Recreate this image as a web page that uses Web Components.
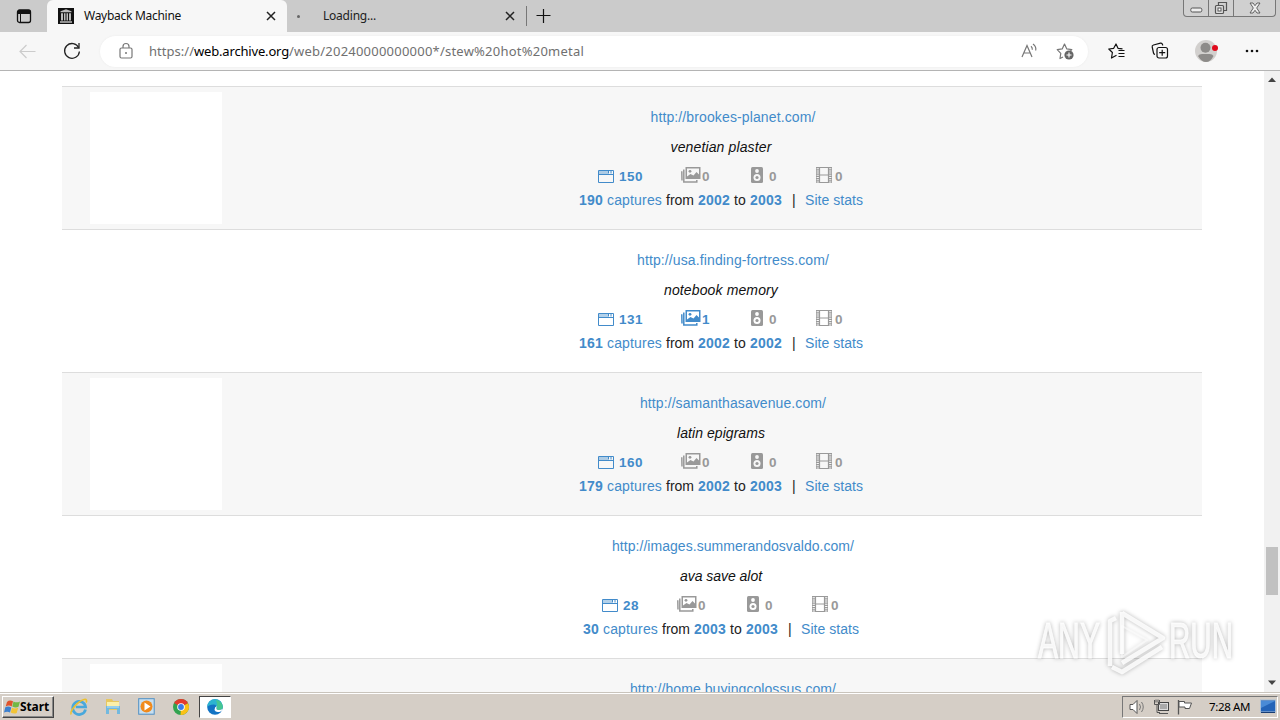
<!DOCTYPE html>
<html lang="en">
<head>
<meta charset="utf-8">
<title>Wayback Machine</title>
<style>
html,body{margin:0;height:100%;overflow:hidden;background:#fff}
body{font-family:"Liberation Sans",Arial,sans-serif;font-size:14px;color:#222}
</style>
</head>
<body>
<desktop-screen></desktop-screen>
<script>
class Base extends HTMLElement {
  connectedCallback() {
    if (this.shadowRoot) return;
    this.attachShadow({mode: 'open'}).innerHTML = this.render();
  }
}

/* Single line of text, tracked so it fills the width given in "w". */
class FitText extends HTMLElement {
  connectedCallback() {
    if (this.shadowRoot) return;
    const w = +this.getAttribute('w');
    this.attachShadow({mode: 'open'}).innerHTML =
      `<style>:host{display:block;flex:none;width:${w}px;white-space:pre}span{display:inline-block}</style><span><slot></slot></span>`;
    const s = this.shadowRoot.querySelector('span');
    const n = this.textContent.length;
    s.style.letterSpacing = ((w - s.getBoundingClientRect().width) / n) + 'px';
  }
}

const ICONS = {
  tabs: [16,16,`<rect x="1.5" y="2" width="13" height="12.5" rx="2" fill="none" stroke="#111" stroke-width="1.3"/><path d="M1.5 6V4Q1.5 2 3.5 2h9q2 0 2 2v2z" fill="#111"/><path d="M4.5 6v8" stroke="#111"/>`],
  archive: [16,16,`<path d="M0 0h16v16H0z" fill="#111"/><path d="M8 1.3l5.5 2v1h-11v-1zM3 5.2h2v7.300H3zM6 5.200h1.500v7.300H6zM8.500 5.200H10v7.300H8.500zM11 5.200h2v7.300h-2zM2 13.300h12v1.400H2z" fill="#bbb"/>`],
  x: [10,10,`<path d="M1 1l8 8M9 1L1 9" stroke="#222" stroke-width="1.500"/>`],
  plus: [14,14,`<path d="M6.500 0v14M-.5 6.500h14" stroke="#111" stroke-width="1.200"/>`],
  back: [17,15,`<path d="M16.500 7.500H1M7.500 1L1 7.500 7.500 14" fill="none" stroke="#ccc" stroke-width="1.200"/>`],
  reload: [18,18,`<path d="M15.700 5.700A7.400 7.400 0 1 0 16.400 9.500" fill="none" stroke="#222" stroke-width="1.300"/><path d="M16 1v5h-5" fill="none" stroke="#222" stroke-width="1.300"/>`],
  lock: [14,17,`<rect x="1" y="5" width="12" height="10" rx="1.500" fill="none" stroke="#777" stroke-width="1.200"/><path d="M4 5V3.500a3 3 0 0 1 6 0V5" fill="none" stroke="#777" stroke-width="1.200"/><circle cx="7" cy="10" r="1" fill="#777"/>`],
  read: [16,16,`<path d="M1 14L6 2.500 11 14M2.800 10h6.500" fill="none" stroke="#777" stroke-width="1.200"/><path d="M10 3.300q1.500 1.300 1.300 3.500M12 1q3.500 2.500 2.700 6.500" fill="none" stroke="#777" stroke-width="1.200"/>`],
  staradd: [18,18,`<path d="M7 15l-3 1.500.8-5.200L1.200 7.700l5-.8L8.500 2l2.300 4.900 5 .8-1.500 1.500" fill="none" stroke="#777" stroke-width="1.200" stroke-linejoin="round"/><circle cx="13" cy="13" r="4.600" fill="#666"/><path d="M13 10.500v5M10.500 13h5" stroke="#fff" stroke-width="1.100"/>`],
  favs: [17,16,`<path d="M8.500 12.200L3.500 15l.9-5.500L.8 6l4.900-.7L8 1l2 4.300 4.500.5" fill="none" stroke="#111" stroke-width="1.200" stroke-linejoin="round"/><path d="M10.500 7.500H16.500M10.500 10.500h6M10.500 13.500h6" stroke="#111" stroke-width="1.200"/>`],
  collections: [18,18,`<path d="M4 12.500Q2.800 12.300 2.500 11L1.200 5Q.8 3.500 2.500 3l7-1.800Q11 .9 11.500 2.500L11.700 3.500" fill="none" stroke="#111" stroke-width="1.200"/><rect x="6" y="5.500" width="10.500" height="10.500" rx="2" fill="#f7f7f7" stroke="#111" stroke-width="1.200"/><path d="M11.200 7.700v6M8.200 10.700h6" stroke="#111" stroke-width="1.200"/>`],
  profile: [24,24,`<circle cx="12" cy="12" r="11" fill="#d2d0ce"/><circle cx="11.500" cy="8.700" r="5" fill="#8d8b89"/><path d="M4 17q1-2 4-2h7.500q3 0 4 2-3 6-7.500 6T4 17z" fill="#8d8b89"/><circle cx="21" cy="9" r="3" fill="#e00b1c"/>`],
  more: [14,4,`<g fill="#111"><circle cx="2" cy="2" r="1.300"/><circle cx="7" cy="2" r="1.300"/><circle cx="12" cy="2" r="1.300"/></g>`],
  min: [13,6,`<rect x=".8" y="1" width="11" height="4" rx="1.500" fill="#eee" stroke="#555"/>`],
  restore: [14,14,`<path d="M4.500 4V1.500h8v8H10" fill="none" stroke="#555" stroke-width="1.200"/><rect x="1.500" y="4.500" width="8" height="8" rx="1" fill="#ddd" stroke="#555" stroke-width="1.200"/><rect x="4" y="7" width="3" height="3" fill="#fff" stroke="#555"/>`],
  close: [12,12,`<path d="M1 1h3l2 2.700L8 1h3L7.700 6 11 11H8L6 8.300 4 11H1l3.300-5z" fill="#eee" stroke="#555" stroke-width=".9"/>`],
  web: [16,14,`<path d="M.5 1.500h15v12H.5zM.5 5.500h15" fill="none" stroke="currentColor"/><path d="M1 2h9v3H1z" fill="currentColor" opacity=".4"/><path d="M10.500 1.500v3M13 1.500v3" stroke="currentColor"/>`],
  image: [20,17,`<path d="M4.500 1h15v12h-15z" fill="currentColor"/><path d="M6 2.500h12v6l-2.500-2.500-3 3.500L9.500 8 6 10.500z" fill="var(--hole,#f7f7f7)"/><circle cx="9" cy="5.300" r="1.400" fill="currentColor"/><path d="M3.500 4.200H2.800V16h13v-2M1.500 6H.800l.2 8.500" fill="none" stroke="currentColor" stroke-width="1.500"/>`],
  audio: [12,17,`<rect y="1" width="12" height="16" rx="1.500" fill="currentColor"/><circle cx="6" cy="5" r="1.900" fill="var(--hole,#f7f7f7)"/><circle cx="6" cy="11.500" r="3.500" fill="var(--hole,#f7f7f7)"/><circle cx="6" cy="11.500" r="1.600" fill="currentColor"/>`],
  film: [16,17,`<path d="M3.500 1.500h9v15h-9zM3.500 9h9" fill="none" stroke="currentColor" stroke-width="1.200"/><path d="M1.500 1v16M14.500 1v16" stroke="currentColor" stroke-width="3" stroke-dasharray="1.200 1"/><path d="M.5 1v16M15.500 1v16" stroke="currentColor" opacity=".6"/>`],
  up: [10,6,`<path d="M1 5L5 .500l4 4.500z" fill="#444"/>`],
  down: [10,6,`<path d="M1 .5L5 5 9 .5z" fill="#444"/>`],
  flag: [15,16,`<path d="M2 3Q4.500.500 8 2.300L6.700 7.500Q4 5.700.7 7.500z" fill="#e0532c"/><path d="M8.500 2.500q3 1.700 6.500 0l-1.500 5.200q-2.700 1.500-6.200-.2z" fill="#72b844"/><path d="M.3 8.300q3-1.500 6 .2L5 13.500Q2.500 12-1 13.400z" fill="#3c80cf"/><path d="M7 8.800q2.700 1.500 6.200 0L11.700 14q-2.500 1.300-6-.4z" fill="#f2c437"/>`],
  ie: [18,18,`<path d="M15.500 11.500A6.500 6.500 0 1 1 15.600 9H5.800" fill="none" stroke="#48a8dc" stroke-width="2.700"/><path d="M1.200 16.500C-1 13.500 8 3 14 1.500c3-.7 3 1.500 2 3" fill="none" stroke="#ecc02d" stroke-width="1.600"/>`],
  folder: [16,17,`<path d="M1 1h6l1 2h6v9H1z" fill="#e8c75e"/><path d="M2 4h12v4H2z" fill="#fbefa9"/><path d="M1 8h14v8h-3v-5H4v5H1z" fill="#72b9df"/><path d="M2 9h12" stroke="#bde4f7"/>`],
  media: [17,17,`<rect x=".7" y=".7" width="15.500" height="15.500" fill="#c8dff0" stroke="#4f8fc4"/><circle cx="8.500" cy="8.500" r="6" fill="#f08a1c"/><path d="M6.500 4.500v8l6-4z" fill="#fff"/>`],
  chrome: [16,16,`<circle cx="8" cy="8" r="8" fill="#32a350"/><path d="M8 8L1.100 4A8 8 0 0 1 15 4.200z" fill="#e33b2e"/><path d="M8 8l7-3.800A8 8 0 0 1 7.500 16z" fill="#fbc116"/><circle cx="8" cy="8" r="3.800" fill="#fff"/><circle cx="8" cy="8" r="2.900" fill="#397de9"/>`],
  edge: [16,16,`<circle cx="8" cy="8" r="7.800" fill="#1273c4"/><path d="M.2 8A7.800 7.800 0 0 1 15.800 7.500Q16 11 12 11q-3 0-2.500-2Q10 5.500 6.500 5.500 2 5.500.2 8z" fill="#2cb4d0"/><path d="M9 1q6 1 6.800 6.500Q16 11 12 11q-3 0-2.500-2Q11 5 9 1z" fill="#55cf70" opacity=".65"/><path d="M9.400 9q-.3 2 2.600 2 2.300 0 3.500-1.300.3 1.300-1.200 2.500Q9 14.500 7.500 11 7.500 8 9.700 7z" fill="#fff"/>`],
  sound: [17,16,`<path d="M1 5.500h3L8 1.500v13l-4-4H1z" fill="#fff" stroke="#555"/><path d="M10.500 5q2 3 0 6M12.500 3q3.500 5 0 10" fill="none" stroke="#777"/>`],
  net: [17,16,`<rect x="5.500" y="3.500" width="10" height="8" fill="#ddd" stroke="#444"/><path d="M7 5h7v5H7z" fill="#aaa"/><path d="M1.500 1v4.500h5V1M3 .5v3M5 .5v3M4 5.500v8h3M6 14.500h9" fill="none" stroke="#555"/>`],
  action: [16,16,`<path d="M1.500 1v14.500" stroke="#555" stroke-width="1.300"/><path d="M2 2.500h5.500V4h7l-2 5.500H8V8H2z" fill="#fff" stroke="#555"/>`],
  desk: [16,15,`<rect x=".5" y="1" width="15" height="12" fill="#2464b8" stroke="#a8bfd8"/><path d="M1 2h14L1 9z" fill="#4a8bd6"/><path d="M1 13.500h14" stroke="#173d74"/>`]
};
class UiIcon extends Base {
  render() {
    const [w, h, body] = ICONS[this.getAttribute('name')];
    return `<style>:host{display:block;flex:none;width:${w}px;height:${h}px}svg{display:block;overflow:visible}</style><svg width="${w}" height="${h}" viewBox="0 0 ${w} ${h}">${body}</svg>`;
  }
}

class TabStrip extends Base {
  render() { return `<style>
    :host{display:flex;height:32px;background:#cbcbcb;font:12px/32px "Noto Sans",sans-serif;color:#222;box-sizing:border-box;align-items:stretch}
    .pre{width:47px;display:flex;align-items:center;padding-left:16px;box-sizing:border-box}
    .on{width:240px;box-sizing:border-box;background:#f7f7f7;border-radius:6px 6px 0 0;display:flex;align-items:center;padding:0 11px;color:#111}
    .off{width:239px;box-sizing:border-box;display:flex;align-items:center;padding-left:10px}
    .dot{width:3px;height:3px;border-radius:50%;background:#666;margin-right:23px}
    .on ui-icon+fit-text{margin-left:10px}
    .x{margin-left:auto}.off .x{margin-right:11px}
    .sep{width:1px;height:20px;background:#777;align-self:center;margin-right:10px}
    .plus{align-self:center}
    .win{margin:0 4px 0 auto;display:flex;height:17px;width:93px;box-sizing:border-box;border:1px solid #777;border-top:0;border-radius:0 0 4px 4px;background:#d0d0d0}
    .win div{display:flex;justify-content:center;align-items:center;border-right:1px solid #777;width:24px}.win div:last-child{border:0;flex:1}
    .win div:first-child{align-items:flex-end}.win div:first-child ui-icon{margin-bottom:3px}
  </style>
  <div class="pre"><ui-icon name="tabs"></ui-icon></div>
  <div class="on"><ui-icon name="archive"></ui-icon><fit-text w="97">Wayback Machine</fit-text><ui-icon class="x" name="x"></ui-icon></div>
  <div class="off"><span class="dot"></span><fit-text w="53">Loading...</fit-text><ui-icon class="x" name="x"></ui-icon></div>
  <span class="sep"></span><ui-icon class="plus" name="plus"></ui-icon>
  <div class="win"><div><ui-icon name="min"></ui-icon></div><div><ui-icon name="restore"></ui-icon></div><div><ui-icon name="close"></ui-icon></div></div>`; }
}

class AddressBar extends Base {
  render() { return `<style>
    :host{display:flex;height:39px;box-sizing:border-box;background:#f7f7f7;border-bottom:1px solid #b4b4b4;align-items:center;padding-left:19px}
    .reload{margin:0 27px 0 27px}
    .pill{flex:none;width:988px;height:31px;box-sizing:border-box;border-radius:16px;background:#fff;display:flex;align-items:center;padding:0 14px 0 19px;margin-left:-8px;box-shadow:0 0 2px #e8e8e8;font:13px/30px "Noto Sans",sans-serif;color:#707070}
    .pill fit-text:first-of-type{margin-left:16px}.host{color:#000}
    .read{margin-left:auto;margin-right:19px}
    .favs{margin-left:20px}.col{margin-left:26px}.pro{margin-left:25px}.more{margin-left:27px}
  </style>
  <ui-icon name="back"></ui-icon><ui-icon class="reload" name="reload"></ui-icon>
  <div class="pill"><ui-icon name="lock"></ui-icon><fit-text w="45">https://</fit-text><fit-text class="host" w="95">web.archive.org</fit-text><fit-text w="295">/web/20240000000000*/stew%20hot%20metal</fit-text>
  <ui-icon class="read" name="read"></ui-icon><ui-icon name="staradd"></ui-icon></div>
  <ui-icon class="favs" name="favs"></ui-icon><ui-icon class="col" name="collections"></ui-icon><ui-icon class="pro" name="profile"></ui-icon><ui-icon class="more" name="more"></ui-icon>`; }
}

class MediaCount extends Base {
  render() {
    const a = n => this.getAttribute(n);
    return `<style>:host{display:flex;align-items:flex-end;color:#999;height:17px;gap:${a('gap')}px}
    :host([on]){color:#428bca}fit-text{font-weight:bold;font-size:13.500px;line-height:16px;margin-bottom:-2px}</style>
    <ui-icon name="${a('kind')}"></ui-icon><fit-text w="${a('w')}">${a('count')}</fit-text>`;
  }
}

class SiteResult extends Base {
  render() {
    const a = n => this.getAttribute(n);
    const details = () => {
      const nw = a('pages').length * 8, tw = a('total').length * 8;
      return `<fit-text class="q" w="${a('qw')}">${a('query')}</fit-text>
    <div class="media"><media-count on kind="web" gap="5" w="${nw}" count="${a('pages')}" style="margin-right:38px"></media-count>
    <media-count ${a('images') !== '0' ? 'on' : ''} kind="image" gap="1" w="8" count="${a('images')}" style="margin-right:41px"></media-count>
    <media-count kind="audio" gap="6" w="8" count="0" style="margin-right:39px"></media-count>
    <media-count kind="film" gap="3" w="8" count="0"></media-count></div>
    <div class="caps"><fit-text class="b" w="${tw}">${a('total')}</fit-text><fit-text class="l" w="55">captures</fit-text><fit-text w="28">from</fit-text><fit-text class="b" w="32">${a('from')}</fit-text><fit-text w="12">to</fit-text><fit-text class="b" w="32">${a('to')}</fit-text><fit-text class="bar" w="4">|</fit-text><fit-text class="l" w="58">Site stats</fit-text></div>`;
    };
    return `<style>
    :host{display:flex;flex:none;height:143px;box-sizing:border-box;border-top:1px solid #ddd;background:#fff;--hole:#fff;line-height:20px;color:#222}
    :host([shade]){background:#f7f7f7;--hole:#f7f7f7}
    .thumb{flex:none;width:132px;height:132px;margin:5px 18px 0 28px;background:#fff}
    .info{flex:1;display:flex;flex-direction:column;align-items:center;padding-top:20px}
    .url{color:#428bca;padding-left:24px}.q{font-style:italic;margin-top:10px;color:#111}
    .media{display:flex;margin:9px 1px 0 0;height:17px}
    .caps{display:flex;gap:4px;margin-top:7px}
    .l{color:#428bca}.b{color:#428bca;font-weight:bold}.bar{margin:0 5px 0 6px}
    </style>
    <div class="thumb"></div><div class="info">
    <fit-text class="url" w="${a('uw')}">${a('url')}</fit-text>
    ${a('query') ? details() : ''}
    </div>`;
  }
}

class ScrollTrack extends Base {
  render() { return `<style>:host{display:flex;flex-direction:column;align-items:center;width:16px;flex:none;background:#f1f1f1;box-sizing:border-box;padding:6px 0}
  .thumb{width:12px;height:48px;background:#c1c1c1;margin-top:464px}.d{margin-top:auto}</style>
  <ui-icon name="up"></ui-icon><div class="thumb"></div><ui-icon class="d" name="down"></ui-icon>`; }
}

class WaterMark extends Base {
  render() { return `<style>:host{position:absolute;left:1030px;top:604px;width:210px;height:76px;pointer-events:none}
  svg{display:block;filter:drop-shadow(0 0 2px rgba(0,0,0,.32))}text{font:50px "Liberation Sans",sans-serif;fill:#fff;fill-opacity:.85;stroke:#fff;stroke-opacity:.8;stroke-width:1px}</style>
  <svg width="210" height="76"><text x="8" y="54" textLength="62" lengthAdjust="spacingAndGlyphs">ANY</text><text x="139" y="54" textLength="64" lengthAdjust="spacingAndGlyphs">RUN</text>
  <g fill="none" stroke="#fff" stroke-opacity=".85" stroke-width="4.500" stroke-linejoin="round"><path d="M92 8v42M92 9l41 25-41 25M80 62V17l6-3M82 63l10 5 40-25"/><path d="M92 22v31l25-17z" stroke-width="2" stroke-opacity=".5"/></g></svg>`; }
}

class TaskBar extends Base {
  render() { return `<style>
    :host{display:flex;align-items:center;height:28px;box-sizing:border-box;border-top:1px solid #c9c4bc;box-shadow:inset 0 1px #fff;background:#d5cec6;padding:0 2px}
    .start{width:52px;height:22px;box-sizing:border-box;display:flex;align-items:center;border:1px solid;border-color:#fff #444 #444 #fff;box-shadow:inset -1px -1px #888;padding-left:2px;font:bold 12px/20px "Noto Sans",sans-serif;color:#000}
    .ie{margin-left:16px}.fo{margin-left:17px}.me{margin-left:17px}.ch{margin-left:18px}
    .edge{margin-left:10px;width:32px;height:22px;box-sizing:border-box;border:1px solid;border-color:#444 #fff #fff #444;background:#fff;display:flex;align-items:center;justify-content:center}
    .tray{margin-left:auto;width:156px;height:22px;box-sizing:border-box;border:1px solid;border-color:#777 #fff #fff #777;display:flex;align-items:center;padding-left:6px;font:11.500px/20px "Noto Sans",sans-serif;color:#000}
    .n{margin-left:7px}.a{margin-left:7px}.t{margin-left:16px}.d{margin-left:10px}
  </style>
  <div class="start"><ui-icon name="flag"></ui-icon><fit-text w="29">Start</fit-text></div>
  <ui-icon class="ie" name="ie"></ui-icon><ui-icon class="fo" name="folder"></ui-icon><ui-icon class="me" name="media"></ui-icon><ui-icon class="ch" name="chrome"></ui-icon>
  <div class="edge"><ui-icon name="edge"></ui-icon></div>
  <div class="tray"><ui-icon name="sound"></ui-icon><ui-icon class="n" name="net"></ui-icon><ui-icon class="a" name="action"></ui-icon><fit-text class="t" w="41">7:28 AM</fit-text><ui-icon class="d" name="desk"></ui-icon></div>`; }
}

class DesktopScreen extends Base {
  render() { return `<style>
    :host{display:flex;flex-direction:column;width:1280px;height:720px;overflow:hidden;position:relative;background:#fff}
    tab-strip,address-bar,task-bar{flex:none}
    .view{flex:1;min-height:0;display:flex;overflow:hidden}
    .page{flex:1;padding:15px 62px 0;overflow:hidden;display:flex;flex-direction:column}
  </style>
  <tab-strip></tab-strip><address-bar></address-bar>
  <div class="view"><div class="page">
    <site-result shade url="http://brookes-planet.com/" uw="165" query="venetian plaster" qw="101" pages="150" images="0" total="190" from="2002" to="2003"></site-result>
    <site-result url="http://usa.finding-fortress.com/" uw="192" query="notebook memory" qw="114" pages="131" images="1" total="161" from="2002" to="2002"></site-result>
    <site-result shade url="http://samanthasavenue.com/" uw="186" query="latin epigrams" qw="88" pages="160" images="0" total="179" from="2002" to="2003"></site-result>
    <site-result url="http://images.summerandosvaldo.com/" uw="242" query="ava save alot" qw="82" pages="28" images="0" total="30" from="2003" to="2003"></site-result>
    <site-result shade url="http://home.buyingcolossus.com/" uw="206"></site-result>
  </div><scroll-track></scroll-track></div>
  <task-bar></task-bar><water-mark></water-mark>`; }
}

for (const [n, c] of Object.entries({'fit-text': FitText, 'ui-icon': UiIcon, 'tab-strip': TabStrip, 'address-bar': AddressBar, 'media-count': MediaCount, 'site-result': SiteResult, 'scroll-track': ScrollTrack, 'water-mark': WaterMark, 'task-bar': TaskBar, 'desktop-screen': DesktopScreen})) customElements.define(n, c);
</script>
</body>
</html>
